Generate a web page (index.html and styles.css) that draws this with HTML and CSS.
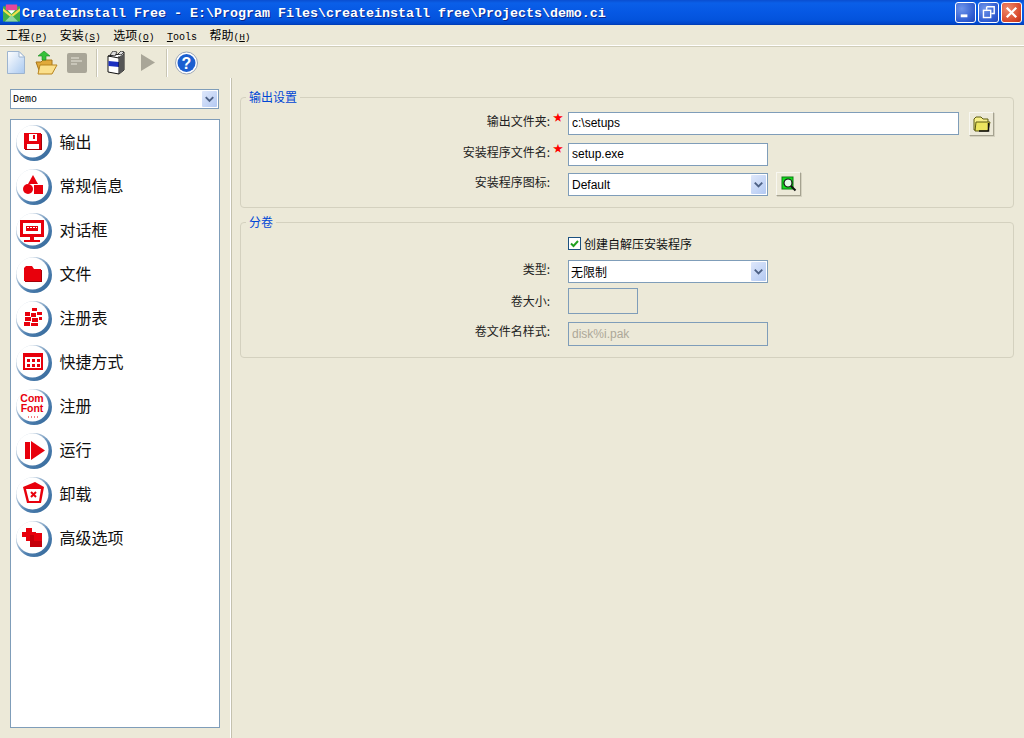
FILE: index.html
```html
<!DOCTYPE html>
<html lang="zh">
<head>
<meta charset="utf-8">
<title>CreateInstall Free</title>
<link rel="stylesheet" href="styles.css">
</head>
<body>
<svg class="defs" width="0" height="0">
  <defs>
    <linearGradient id="ringGrad" x1="0" y1="0" x2="1" y2="1">
      <stop offset="0.2" stop-color="#d5dfe9"/>
      <stop offset="0.6" stop-color="#4f80b0"/>
      <stop offset="1" stop-color="#2f6496"/>
    </linearGradient>
    <symbol id="ring" viewBox="0 0 36 36">
      <circle cx="18" cy="18" r="18" fill="url(#ringGrad)"/>
      <circle cx="16.5" cy="16.5" r="16" fill="#fff"/>
    </symbol>
  </defs>
</svg>
<div class="window">
  <header class="titlebar">
    <svg class="app-icon" viewBox="0 0 18 18">
      <rect x="0" y="2" width="18" height="16" fill="#3fae49"/>
      <rect x="3" y="0" width="12" height="6" fill="#e6479a"/>
      <path d="M0 4 L9 11 L18 4 V7 L9 14 L0 7Z" fill="#f4e04d"/>
      <path d="M2 18 L9 11 L16 18Z" fill="#8fd6a0"/>
      <path d="M5 6 H13 L9 10Z" fill="#fff"/>
    </svg>
    <span class="title-text">CreateInstall Free - E:\Program Files\createinstall free\Projects\demo.ci</span>
    <div class="win-buttons">
      <div class="win-btn"><svg viewBox="0 0 20 20"><rect x="5" y="12" width="7" height="3" fill="#fff"/></svg></div>
      <div class="win-btn"><svg viewBox="0 0 20 20"><path d="M8 4h8v7h-3M8 4v3" fill="none" stroke="#fff" stroke-width="1.5"/><rect x="4.7" y="7.7" width="7.6" height="7.6" fill="none" stroke="#fff" stroke-width="1.5"/></svg></div>
      <div class="win-btn win-close"><svg viewBox="0 0 20 20"><path d="M5 5L15 15M15 5L5 15" stroke="#fff" stroke-width="2.4"/></svg></div>
    </div>
  </header>

  <nav class="menubar">
    <span class="menu-item">工程<i>(<u>P</u>)</i></span>
    <span class="menu-item">安装<i>(<u>S</u>)</i></span>
    <span class="menu-item">选项<i>(<u>O</u>)</i></span>
    <span class="menu-item menu-tools"><i><u>T</u>ools</i></span>
    <span class="menu-item">帮助<i>(<u>H</u>)</i></span>
  </nav>

  <div class="toolbar">
    <svg class="tool tool-new" viewBox="0 0 18 23">
      <defs><linearGradient id="docG" x1="0" y1="0" x2="1" y2="1"><stop offset="0" stop-color="#fff"/><stop offset="1" stop-color="#a9c9f0"/></linearGradient></defs>
      <path d="M.5.5H12L17.5 6V22.5H.5Z" fill="url(#docG)" stroke="#9db4cf"/>
      <path d="M12 .5V6H17.5Z" fill="#fff" stroke="#9db4cf"/>
    </svg>
    <svg class="tool tool-open" viewBox="0 0 23 24">
      <path d="M1 11H6L8 9H17V22H5Z" fill="#e0a93a" stroke="#a8761a"/>
      <path d="M5 14H22L17 23H3Z" fill="#fbe08c" stroke="#b9851f"/>
      <path d="M7 9V5H3L9 0L15 5H11V9Z" fill="#35c13a" stroke="#1d8a22" stroke-width=".6"/>
    </svg>
    <svg class="tool tool-grey" viewBox="0 0 20 20">
      <rect width="20" height="20" rx="2" fill="#a9a698"/>
      <path d="M4 5H12M4 8H15M4 11H10" stroke="#e8e6da" stroke-width="1"/>
    </svg>
    <div class="tool-sep"></div>
    <svg class="tool tool-box" viewBox="0 0 18 24">
      <path d="M1 5L13 3L17 1V19L12 23L1 21Z" fill="#fff" stroke="#111"/>
      <path d="M1.500 10L12 11V16L1.500 15Z" fill="#1b2fc0"/>
      <path d="M12 5V23M1 5L12 7L17 3" fill="none" stroke="#111"/>
      <path d="M12 7L17 3V19L12 23Z" fill="#555"/>
      <path d="M3 4L6 0L10 1L8 5ZM11 3L14 0L17 1L14 4Z" fill="#ddd" stroke="#111" stroke-width=".7"/>
    </svg>
    <svg class="tool tool-play" viewBox="0 0 14 17"><path d="M0 0L14 8.500L0 17Z" fill="#a9a698"/></svg>
    <div class="tool-sep tool-sep-b"></div>
    <svg class="tool tool-help" viewBox="0 0 23 24">
      <circle cx="11.500" cy="12" r="11" fill="#fff" stroke="#9aa5b5" stroke-width="1"/>
      <circle cx="11.500" cy="12" r="9" fill="#1c5fd0"/>
      <text x="11.500" y="18" class="help-mark" text-anchor="middle">?</text>
    </svg>
  </div>

  <div class="main">
    <aside class="side">
      <div class="combo combo-demo"><span class="combo-text mono">Demo</span><span class="combo-arrow"><svg viewBox="0 0 16 16"><path d="M4 6L8 10L12 6" fill="none" stroke="#4d6185" stroke-width="2"/></svg></span></div>
      <ul class="nav-list">
        <li class="nav-item">
          <svg class="badge" viewBox="0 0 36 36"><use href="#ring"/>
            <path d="M8 8H25V24H8Z" fill="#e8000c"/><path d="M25 9H26V25H9V24H25Z" fill="#a30008"/><rect x="13" y="9" width="8" height="7" fill="#fff"/><rect x="17" y="10" width="2" height="4" fill="#e8000c"/><rect x="11" y="19" width="12" height="5" fill="#fff"/></svg>
          <span>输出</span></li>
        <li class="nav-item">
          <svg class="badge" viewBox="0 0 36 36"><use href="#ring"/>
            <path d="M17 6L22 15H12Z" fill="#e8000c"/><circle cx="12" cy="20" r="5" fill="#e8000c"/><rect x="18" y="16" width="9" height="9" fill="#e8000c"/></svg>
          <span>常规信息</span></li>
        <li class="nav-item">
          <svg class="badge" viewBox="0 0 36 36"><use href="#ring"/>
            <rect x="4" y="7" width="24" height="17" fill="#e8000c"/><rect x="7" y="10" width="18" height="11" fill="#fff"/><rect x="10" y="13" width="12" height="5" fill="#e8000c"/><path d="M11 14.500H21" stroke="#fff" stroke-dasharray="2 1"/><path d="M14 24H18V27H24V29H8V27H14Z" fill="#e8000c"/></svg>
          <span>对话框</span></li>
        <li class="nav-item">
          <svg class="badge" viewBox="0 0 36 36"><use href="#ring"/>
            <path d="M8 11L10 9H16L18 12H25V24H8Z" fill="#e8000c"/><path d="M25 13H26V25H9V24H25Z" fill="#a30008"/></svg>
          <span>文件</span></li>
        <li class="nav-item">
          <svg class="badge" viewBox="0 0 36 36"><use href="#ring"/>
            <g fill="#e8000c"><rect x="16" y="7" width="5" height="3"/><rect x="9" y="11" width="5" height="4"/><rect x="21" y="11" width="5" height="3"/><rect x="15" y="12" width="5" height="4"/><rect x="9" y="16" width="6" height="4"/><rect x="16" y="17" width="6" height="4"/><rect x="23" y="16" width="3" height="3"/><rect x="8" y="21" width="6" height="4"/><rect x="15" y="22" width="7" height="3"/></g></svg>
          <span>注册表</span></li>
        <li class="nav-item">
          <svg class="badge" viewBox="0 0 36 36"><use href="#ring"/>
            <rect x="7" y="8" width="20" height="17" fill="#e8000c"/><rect x="9" y="12" width="16" height="11" fill="#fff"/><g fill="#e8000c"><rect x="11" y="14" width="3" height="3"/><rect x="16" y="14" width="3" height="3"/><rect x="21" y="14" width="3" height="3"/><rect x="11" y="19" width="3" height="3"/><rect x="16" y="19" width="3" height="3"/><rect x="21" y="19" width="3" height="3"/></g></svg>
          <span>快捷方式</span></li>
        <li class="nav-item">
          <svg class="badge" viewBox="0 0 36 36"><use href="#ring"/>
            <text x="16" y="13" class="font-mark" text-anchor="middle">Com</text><text x="16" y="23" class="font-mark" text-anchor="middle">Font</text><path d="M12 28H22" stroke="#e8000c" stroke-dasharray="1 2"/></svg>
          <span>注册</span></li>
        <li class="nav-item">
          <svg class="badge" viewBox="0 0 36 36"><use href="#ring"/>
            <rect x="9" y="9" width="5" height="17" fill="#e8000c"/><path d="M15 8L29 17.500L15 27Z" fill="#e8000c"/></svg>
          <span>运行</span></li>
        <li class="nav-item">
          <svg class="badge" viewBox="0 0 36 36"><use href="#ring"/>
            <path d="M7 10L19 5L28 10L25 26H11Z" fill="#e8000c"/><path d="M10 12H25L23 24H13Z" fill="#fff"/><path d="M15 15L20 20M20 15L15 20" stroke="#e8000c" stroke-width="2"/></svg>
          <span>卸载</span></li>
        <li class="nav-item">
          <svg class="badge" viewBox="0 0 36 36"><use href="#ring"/>
            <path d="M10 7H16V11H20V16H16V20H10V16H6V11H10Z" fill="#e8000c"/><rect x="14" y="14" width="12" height="12" fill="#c4000a"/><rect x="18" y="12" width="8" height="8" fill="#e8000c"/></svg>
          <span>高级选项</span></li>
      </ul>
    </aside>

    <div class="splitter"></div>

    <section class="content">
      <fieldset class="group group-output">
        <legend class="legend">输出设置</legend>
        <div class="row">
          <label class="label">输出文件夹:</label><span class="star">★</span>
          <div class="controls">
            <input class="field field-wide" value="c:\setups" readonly>
            <button class="tool-btn tool-btn-folder" type="button"><svg viewBox="0 0 18 16"><path d="M1 3L3 1H8L10 3H15V14H1Z" fill="#f7f08a" stroke="#5c5a10"/><path d="M3 6H17L15 15H2Z" fill="#ece55f" stroke="#5c5a10"/><path d="M15.500 7V15H6" stroke="#111" stroke-width="1.500" fill="none"/></svg></button>
          </div>
        </div>
        <div class="row row-gap">
          <label class="label">安装程序文件名:</label><span class="star">★</span>
          <div class="controls"><input class="field field-std" value="setup.exe" readonly></div>
        </div>
        <div class="row row-gap">
          <label class="label">安装程序图标:</label><span></span>
          <div class="controls">
            <div class="combo combo-std"><span class="combo-text">Default</span><span class="combo-arrow"><svg viewBox="0 0 16 16"><path d="M4 6L8 10L12 6" fill="none" stroke="#4d6185" stroke-width="2"/></svg></span></div>
            <button class="tool-btn tool-btn-find" type="button"><svg viewBox="0 0 16 16"><rect x="1" y="1" width="11" height="12" fill="#10e01c" stroke="#0a7a12"/><circle cx="7" cy="7" r="4" fill="#e4fbe8" stroke="#111" stroke-width="1.200"/><path d="M10 10L14.500 14.500" stroke="#111" stroke-width="2"/></svg></button>
          </div>
        </div>
      </fieldset>

      <fieldset class="group group-split">
        <legend class="legend">分卷</legend>
        <div class="row row-check">
          <span></span><span></span>
          <label class="check-wrap"><span class="check"><svg viewBox="0 0 11 11"><path d="M2 5.500L4.500 8L9 3" fill="none" stroke="#21a121" stroke-width="2"/></svg></span>创建自解压安装程序</label>
        </div>
        <div class="row row-type">
          <label class="label">类型:</label><span></span>
          <div class="controls"><div class="combo combo-std"><span class="combo-text combo-cjk">无限制</span><span class="combo-arrow"><svg viewBox="0 0 16 16"><path d="M4 6L8 10L12 6" fill="none" stroke="#4d6185" stroke-width="2"/></svg></span></div></div>
        </div>
        <div class="row row-size">
          <label class="label label-center">卷大小:</label><span></span>
          <div class="controls"><input class="field field-size" disabled></div>
        </div>
        <div class="row row-pattern">
          <label class="label">卷文件名样式:</label><span></span>
          <div class="controls"><input class="field field-std" value="disk%i.pak" disabled></div>
        </div>
      </fieldset>
    </section>
  </div>
</div>
</body>
</html>
```

FILE: styles.css
```css
* { box-sizing: border-box; }
html, body { margin: 0; padding: 0; }
body {
  width: 1024px;
  height: 738px;
  overflow: hidden;
  background: #ece9d8;
  color: #000;
  font-family: "Noto Sans CJK SC", "Liberation Sans", sans-serif;
  font-size: 12px;
}
.defs { position: absolute; }
.window { display: flex; flex-direction: column; height: 738px; }

.titlebar {
  height: 25px;
  flex: none;
  display: flex;
  align-items: center;
  padding: 0 2px 0 3px;
  background: linear-gradient(#0a4ed0 0, #0a5fe8 3px, #0658e4 12px, #0353dc 20px, #0044c8 24px, #0038a8 25px);
}
.app-icon { width: 17px; height: 18px; flex: none; }
.title-text {
  margin-left: 2px;
  padding-top: 2px;
  font-family: "Liberation Mono", monospace;
  font-weight: bold;
  font-size: 13.33px;
  color: #fff;
  text-shadow: 1px 1px 0 #0a2a90;
  white-space: pre;
}
.win-buttons { margin-left: auto; display: flex; gap: 2px; }
.win-btn {
  width: 21px;
  height: 21px;
  border: 1px solid #fff;
  border-radius: 3px;
  background: radial-gradient(circle at 30% 30%, #6f95ea, #2d5ad0 70%, #2348b8);
}
.win-btn svg { display: block; width: 19px; height: 19px; }
.win-close { background: radial-gradient(circle at 30% 30%, #ee8a6c, #d8472a 70%, #b53219); }

.menubar {
  height: 22px;
  flex: none;
  display: flex;
  align-items: center;
  gap: 12.5px;
  padding: 1px 0 0 6px;
  border-bottom: 1px solid #d0cdb8;
  box-shadow: inset 0 -1px 0 #fff;
}
.menu-item { line-height: 18px; white-space: pre; }
.menu-item i {
  font-family: "Liberation Mono", monospace;
  font-style: normal;
  font-size: 9.5px;
}
.menu-tools i { font-size: 10px; }

.toolbar {
  height: 31px;
  flex: none;
  display: flex;
  align-items: center;
  padding: 0 0 0 7px;
}
.tool { display: block; flex: none; }
.tool-new { width: 18px; height: 23px; }
.tool-open { width: 23px; height: 24px; margin-left: 10px; }
.tool-grey { width: 20px; height: 20px; margin-left: 9px; }
.tool-sep { width: 2px; height: 28px; margin-left: 9px; border-left: 1px solid #c9c6b4; border-right: 1px solid #fff; flex: none; }
.tool-box { width: 18px; height: 24px; margin-left: 9px; }
.tool-play { width: 14px; height: 17px; margin-left: 16px; }
.tool-sep-b { margin-left: 11px; }
.tool-help { width: 23px; height: 24px; margin-left: 7px; }
.help-mark { font: bold 16px "Liberation Sans", sans-serif; fill: #fff; }

.main { flex: 1; display: flex; min-height: 0; }
.side { width: 230px; flex: none; padding: 11px 10px 10px; display: flex; flex-direction: column; }
.splitter { width: 2px; flex: none; border-left: 1px solid #fff; border-right: 1px solid #c4c1ae; }

.combo {
  display: flex;
  align-items: center;
  background: #fff;
  border: 1px solid #7f9db9;
  padding: 1px;
}
.combo-demo { height: 20px; width: 209px; }
.combo-std { height: 23px; width: 200px; }
.combo-text { flex: 1; padding-left: 2px; font-family: "Liberation Sans", sans-serif; font-size: 12px; }
.mono { font-family: "Liberation Mono", monospace; font-size: 10px; padding-left: 1px; }
.combo-cjk { font-family: "Noto Sans CJK SC", sans-serif; font-size: 12px; padding-left: 1px; }
.combo-arrow {
  width: 15px;
  height: 100%;
  flex: none;
  border-radius: 1px;
  background: linear-gradient(135deg, #dfe8fb, #b3c9f2);
}
.combo-arrow svg { display: block; width: 15px; height: 100%; }

.nav-list {
  list-style: none;
  margin: 10px 0 0;
  padding: 1px 0 0;
  flex: 1;
  width: 210px;
  background: #fff;
  border: 1px solid #7f9db9;
}
.nav-item {
  height: 44px;
  display: flex;
  align-items: center;
  gap: 7.5px;
  padding-left: 5px;
  font-size: 16px;
  color: #111;
}
.nav-item span { padding-bottom: 4px; }
.badge { width: 36px; height: 36px; flex: none; display: block; }
.font-mark { font: bold 10.5px "Liberation Sans", sans-serif; fill: #e8000c; }

.content { flex: 1; padding: 12px 10px 0 8px; min-width: 0; }
.group {
  margin: 0;
  padding: 0;
  min-width: 0;
  border: 1px solid #d4d1bf;
  border-radius: 4px;
}
.group-output { padding: 8px 0 11px; }
.group-split { margin-top: 7px; padding: 6px 0 11px; }
.legend {
  margin-left: 5px;
  padding: 0 3px;
  font-size: 12px;
  line-height: 14px;
  color: #0046d5;
}
.row { display: grid; grid-template-columns: 310px 17px 1fr; }
.row-gap { margin-top: 7px; }
.row-check { height: 16px; }
.row-type { margin-top: 9px; }
.row-size { margin-top: 5px; }
.row-pattern { margin-top: 8px; }
.label { line-height: 18px; text-align: right; padding-right: 1px; color: #222; white-space: pre; }
.label-center { align-self: center; }
.star { color: #f00; font-size: 10px; line-height: 10px; padding-left: 2px; }
.controls { display: flex; align-items: flex-start; }
.field {
  display: block;
  height: 23px;
  padding: 0 3px;
  border: 1px solid #7f9db9;
  background: #fff;
  font-family: "Liberation Sans", sans-serif;
  font-size: 12px;
  color: #000;
  outline: none;
}
.field:read-only:not(:disabled) { padding-bottom: 2px; }
.field:disabled { background: #ece9d8; color: #aca899; }
.field-wide { width: 391px; }
.field-std { width: 200px; }
.row-pattern .field { height: 24px; }
.field-size { width: 70px; height: 26px; }
.tool-btn {
  display: block;
  padding: 0;
  background: #ece9d8;
  border: 1px solid;
  border-color: #f8f7f0 #a5a290 #a5a290 #f8f7f0;
  box-shadow: 1px 1px 0 #d4d1bf;
}
.tool-btn svg { display: block; margin: auto; width: 18px; height: 16px; }
.tool-btn-folder { width: 25px; height: 24px; margin-left: 10px; }
.tool-btn-find { width: 25px; height: 24px; margin-left: 8px; margin-top: -1px; }
.check-wrap { display: flex; align-items: center; gap: 3px; color: #111; white-space: pre; }
.check { width: 13px; height: 13px; border: 1px solid #1c5180; background: #fff; flex: none; }
.check svg { display: block; width: 11px; height: 11px; }
```
